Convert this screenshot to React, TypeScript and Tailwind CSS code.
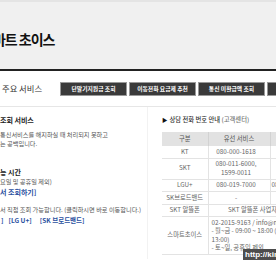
const buttons = ["단말기지원금 조회", "이동전화 요금제 추천", "통신 미환급액 조회", "통신요금 정보포털"];

type Row = { name: string; wired: string[]; wireless: string };

const rows: Row[] = [
  { name: "KT", wired: ["080-000-1618"], wireless: "114" },
  { name: "SKT", wired: ["080-011-6000,", "1599-0011"], wireless: "114" },
  { name: "LGU+", wired: ["080-019-7000"], wireless: "080-019-7000, 1544-0010" },
  { name: "SK브로드밴드", wired: ["-"], wireless: "106" },
];

export default function App() {
  return (
    <div className="relative h-[260px] w-[276px] overflow-hidden bg-white font-['Noto_Sans_CJK_KR','Noto_Sans',sans-serif] text-[#555]">
      <header className="flex h-[69px] items-center border-t-2 border-[#e4e4e4] bg-[#f0f0f0]">
        <h1 className="-ml-[19px] mt-[6px] whitespace-nowrap text-[14px] font-bold leading-none tracking-[-1px] text-[#111]">
          스마트 초이스
        </h1>
      </header>
      <div className="h-[2px] bg-[#222]" />
      <nav className="flex h-[36px] items-center border-b border-[#e6e6e6]">
        <div className="w-[60px] shrink-0 whitespace-nowrap pl-[2px] text-[8.3px] leading-none text-[#333]">
          주요 서비스
        </div>
        <div className="flex shrink-0 gap-[2px]">
          {buttons.map((b) => (
            <button
              key={b}
              className="flex h-[14px] w-[67px] shrink-0 items-center justify-center whitespace-nowrap border border-[#999] bg-[#3a3a3a] text-[5.8px] font-bold leading-none text-white"
            >
              {b}
            </button>
          ))}
        </div>
      </nav>
      <div className="flex">
        <section className="h-[152px] w-[148px] shrink-0 overflow-hidden whitespace-nowrap border-r border-[#f2f2f2] pt-[8px]">
          <h2 className="text-[7px] font-bold leading-[10px] text-[#222]">조회 서비스</h2>
          <p className="mt-[5px] text-[6.2px] leading-[9px]">
            통신서비스를 해지하실 때 처리되지 못하고
            <br />는 공백입니다.
          </p>
          <h3 className="mt-[18.5px] text-[7px] font-bold leading-[10px] text-[#222]">능 시간</h3>
          <p className="text-[6.2px] leading-[10px]">요일 및 공휴일 제외)</p>
          <p className="text-[7px] font-bold leading-[10px] text-[#2a4fa0]">서 조회하기]</p>
          <p className="mt-[8px] text-[6.2px] leading-[10px]">서 직접 조회 가능합니다. (클릭하시면 바로 이동합니다.)</p>
          <p className="flex text-[6.5px] font-bold leading-[10px] text-[#2a4fa0]">
            <span className="ml-[1px] mr-[5px]">]</span>
            <span className="mr-[8px]">[LG U+]</span>
            <span>[SK 브로드밴드]</span>
          </p>
        </section>
        <section className="shrink-0 pl-[14px] pt-[8px]">
          <h2 className="flex items-center whitespace-nowrap text-[6.3px] font-medium leading-[10px] text-[#333]">
            <span className="mr-[2px] text-[5.5px] text-[#111]">▶</span>
            상담 전화 번호 안내&nbsp;<span className="text-[#777]">(고객센터)</span>
          </h2>
          <table className="mt-[7px] w-[178px] table-fixed border-collapse text-[6.3px] leading-[8.5px] text-[#666]">
            <colgroup>
              <col className="w-[46px]" />
              <col className="w-[62px]" />
              <col className="w-[70px]" />
            </colgroup>
            <thead>
              <tr className="h-[14px] bg-[#e2e2e2] text-[#555]">
                <th className="font-normal">구분</th>
                <th className="border-l border-[#d2d2d2] font-normal">유선 서비스</th>
                <th className="border-l border-[#d2d2d2] font-normal">무선 서비스</th>
              </tr>
            </thead>
            <tbody>
              {rows.map((r) => (
                <tr key={r.name} className="border-b border-[#e3e3e3]">
                  <td className="py-[1.5px] text-center">{r.name}</td>
                  <td className="border-l border-[#e3e3e3] py-[1.5px] pr-[6px] text-center">
                    {r.wired.map((w) => (
                      <div key={w}>{w}</div>
                    ))}
                  </td>
                  <td className="whitespace-nowrap border-l border-[#e3e3e3] py-[1.5px] pl-[1px] text-center">
                    {r.wireless}
                  </td>
                </tr>
              ))}
              <tr className="border-b border-[#e3e3e3]">
                <td className="py-[1.5px] text-center">SKT 알뜰폰</td>
                <td colSpan={2} className="whitespace-nowrap border-l border-[#e3e3e3] py-[1.5px] text-center">
                  SKT 알뜰폰 사업자 고객센터로 문의
                </td>
              </tr>
              <tr className="border-b border-[#e3e3e3]">
                <td className="py-[1.5px] text-center">스마트초이스</td>
                <td colSpan={2} className="whitespace-nowrap border-l border-[#e3e3e3] py-[1.5px] pl-[3px] text-left">
                  <div>02-2015-9163 / info@mail.smartchoice.or.kr</div>
                  <div>- 월~금 - 09:00 ~ 18:00 (점심시간 12:00 ~</div>
                  <div>13:00)</div>
                  <div>- 토~일, 공휴일 제외</div>
                </td>
              </tr>
            </tbody>
          </table>
        </section>
      </div>
      <div className="absolute left-[243px] top-[249px] whitespace-nowrap bg-[#4d4d4d] px-[2px] font-['Liberation_Sans',sans-serif] text-[8px] font-bold leading-[11px] text-white">
        http://kimsi.tistory.com
      </div>
    </div>
  );
}
